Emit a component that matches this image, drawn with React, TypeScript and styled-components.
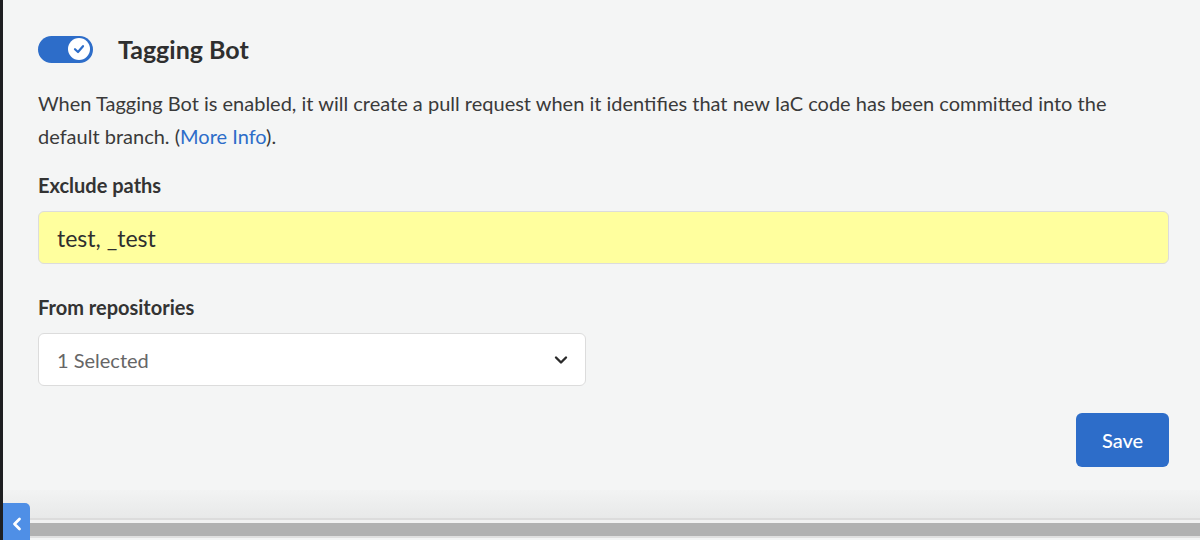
import React from "react";
import styled, { createGlobalStyle } from "styled-components";

const Global = createGlobalStyle`
  html, body { margin: 0; padding: 0; }
  body {
    background: #1e1f21;
    font-family: Lato, "Open Sans", Arial, sans-serif;
    width: 1200px;
    height: 540px;
    overflow: hidden;
  }
`;

const Frame = styled.div`
  position: relative;
  margin-left: 3px;
  width: 1197px;
  height: 540px;
  background: #f4f5f5;
  display: flex;
  flex-direction: column;
`;

const Content = styled.div`
  flex: 1;
  padding: 35px 31px 0 35px;
  display: flex;
  flex-direction: column;
`;

const Header = styled.div`
  display: flex;
  align-items: center;
  gap: 25px;
  height: 28px;
`;

const Toggle = styled.div`
  width: 55px;
  height: 27px;
  border-radius: 14px;
  background: #2d6dc9;
  display: flex;
  align-items: center;
  justify-content: flex-end;
  padding-right: 3px;
  box-sizing: border-box;
`;

const Knob = styled.div`
  width: 22px;
  height: 22px;
  border-radius: 50%;
  background: #ffffff;
  display: flex;
  align-items: center;
  justify-content: center;
`;

const Title = styled.h2`
  margin: 0;
  font-size: 25px;
  font-weight: 700;
  color: #2f2f2f;
`;

const Description = styled.p`
  margin: 24px 0 0 0;
  font-size: 20px;
  line-height: 33px;
  color: #3a3a3a;
  max-width: 1100px;
`;

const Link = styled.a`
  color: #2d6dc9;
  text-decoration: none;
`;

const Label = styled.div<{ $top: number }>`
  margin-top: ${(p) => p.$top}px;
  font-size: 20px;
  font-weight: 700;
  color: #333333;
  line-height: 24px;
`;

const TextInput = styled.div`
  margin-top: 14px;
  height: 53px;
  box-sizing: border-box;
  border: 1.5px solid #dcdcdc;
  border-radius: 6px;
  background: #ffff9e;
  display: flex;
  align-items: center;
  padding-left: 18px;
  font-size: 23px;
  color: #2e2e2e;
  width: 1131px;
`;

const Select = styled.div`
  margin-top: 14px;
  width: 548px;
  height: 53px;
  box-sizing: border-box;
  border: 1.5px solid #dcdcdc;
  border-radius: 6px;
  background: #ffffff;
  display: flex;
  align-items: center;
  justify-content: space-between;
  padding: 0 16px 0 18px;
  font-size: 20px;
  color: #666666;
`;

const Actions = styled.div`
  display: flex;
  justify-content: flex-end;
  width: 1131px;
  margin-top: 27px;
`;

const SaveButton = styled.button`
  width: 93px;
  height: 54px;
  border: none;
  border-radius: 6px;
  background: #2d6dc9;
  color: #ffffff;
  font-family: inherit;
  font-size: 20px;
  font-weight: 500;
`;

const Footer = styled.div`
  height: 50px;
  display: flex;
  flex-direction: column;
`;

const Shade = styled.div`
  height: 28px;
  background: linear-gradient(#f2f3f3, #e8e9e9);
  border-bottom: 2px solid #dcdcdc;
`;

const Gap = styled.div`
  height: 3px;
  background: #f1f1f1;
`;

const Bar = styled.div`
  height: 13px;
  background: #b1b1b1;
  border-bottom: 2px solid #e0e0e0;
`;

const SideTab = styled.div`
  position: absolute;
  left: 0;
  bottom: 0;
  width: 27px;
  height: 37px;
  background: #4f8fe6;
  border-top-right-radius: 5px;
  display: flex;
  align-items: center;
  justify-content: center;
  padding-top: 4px;
  box-sizing: border-box;
`;

export default function App() {
  return (
    <>
      <Global />
      <Frame>
        <Content>
          <Header>
            <Toggle>
              <Knob>
                <svg width="14" height="14" viewBox="0 0 14 14">
                  <path d="M3 7.2 L6 10 L11 4.2" fill="none" stroke="#2d6dc9" strokeWidth="2.2" strokeLinecap="round" strokeLinejoin="round" />
                </svg>
              </Knob>
            </Toggle>
            <Title>Tagging Bot</Title>
          </Header>
          <Description>
            When Tagging Bot is enabled, it will create a pull request when it identifies that new IaC code has been committed into the default branch. (<Link href="#">More Info</Link>).
          </Description>
          <Label $top={20}>Exclude paths</Label>
          <TextInput>test, _test</TextInput>
          <Label $top={31}>From repositories</Label>
          <Select>
            <span>1 Selected</span>
            <svg width="16" height="16" viewBox="0 0 16 16">
              <path d="M3 5.5 L8 10.5 L13 5.5" fill="none" stroke="#2a2a2a" strokeWidth="2.4" strokeLinecap="round" strokeLinejoin="round" />
            </svg>
          </Select>
          <Actions>
            <SaveButton>Save</SaveButton>
          </Actions>
        </Content>
        <Footer>
          <Shade />
          <Gap />
          <Bar />
        </Footer>
        <SideTab>
          <svg width="14" height="16" viewBox="0 0 14 16">
            <path d="M9.5 3 L4.5 8 L9.5 13" fill="none" stroke="#ffffff" strokeWidth="2.8" strokeLinecap="round" strokeLinejoin="round" />
          </svg>
        </SideTab>
      </Frame>
    </>
  );
}
